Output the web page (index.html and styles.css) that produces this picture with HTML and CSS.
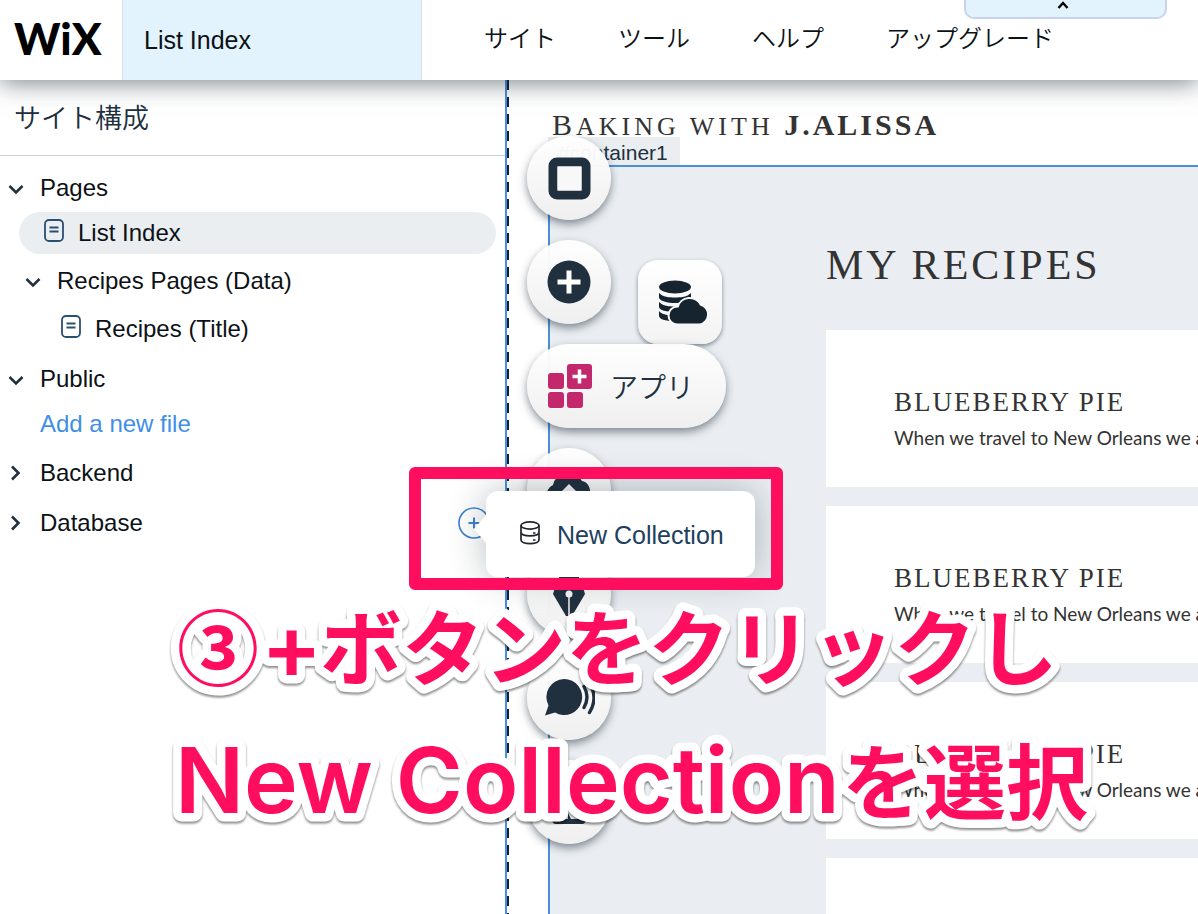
FILE: index.html
```html
<!DOCTYPE html>
<html lang="ja">
<head>
<meta charset="utf-8">
<meta name="viewport" content="width=device-width, initial-scale=1">
<title>Wix Editor</title>
<link rel="stylesheet" href="styles.css">
</head>
<body>
<header class="topbar">
  <a class="logo" href="#">WiX</a>
  <button class="page-picker" type="button">List Index</button>
  <nav class="menu">
    <a href="#">サイト</a>
    <a href="#">ツール</a>
    <a href="#">ヘルプ</a>
    <a href="#">アップグレード</a>
  </nav>
  <button class="pull-tab" type="button" aria-label="閉じる">
    <svg width="12" height="8" viewBox="0 0 12 8"><path d="M1.500 7 6 2l4.500 5" fill="none" stroke="#000" stroke-width="2.400"/></svg>
  </button>
</header>

<main class="workspace">
  <aside class="sidebar">
    <h2 class="sidebar-title">サイト構成</h2>
    <ul class="tree">
      <li class="row"><svg class="chevron" viewBox="0 0 16 16"><path d="M1.500 6 8 12.500 14.500 6"/></svg><span>Pages</span></li>
      <li class="row row-file row-active"><svg class="file" viewBox="0 0 20 24"><rect x="1" y="1" width="18" height="21" rx="4"/><path d="M5.500 8.500h9M5.500 12.500h9"/></svg><span>List Index</span></li>
      <li class="row row-nested"><svg class="chevron" viewBox="0 0 16 16"><path d="M1.500 6 8 12.500 14.500 6"/></svg><span>Recipes Pages (Data)</span></li>
      <li class="row row-file row-deep"><svg class="file" viewBox="0 0 20 24"><rect x="1" y="1" width="18" height="21" rx="4"/><path d="M5.500 8.500h9M5.500 12.500h9"/></svg><span>Recipes (Title)</span></li>
      <li class="row row-section"><svg class="chevron" viewBox="0 0 16 16"><path d="M1.500 6 8 12.500 14.500 6"/></svg><span>Public</span></li>
      <li class="row row-link"><a href="#">Add a new file</a></li>
      <li class="row row-section"><svg class="chevron" viewBox="0 0 16 16"><path d="M4 1.500 10.500 8 4 14.500"/></svg><span>Backend</span></li>
      <li class="row row-section"><svg class="chevron" viewBox="0 0 16 16"><path d="M4 1.500 10.500 8 4 14.500"/></svg><span>Database</span>
        <button class="add" type="button" aria-label="追加"><svg width="32" height="32" viewBox="0 0 32 32" fill="none" stroke="#3a80d2" stroke-width="1.600"><circle cx="16" cy="16" r="15"/><path d="M10.500 16h11M16 10.500v11" stroke-width="2"/></svg></button>
      </li>
    </ul>
  </aside>

  <section class="canvas">
    <h1 class="brand"><span class="brand-cap">B</span>AKING WITH <b>J.ALISSA</b></h1>
    <span class="tag">#container1</span>
    <div class="container">
      <h2 class="recipes-title">MY RECIPES</h2>
      <article class="card"><h3>BLUEBERRY PIE</h3><p>When we travel to New Orleans we always</p></article>
      <article class="card"><h3>BLUEBERRY PIE</h3><p>When we travel to New Orleans we always</p></article>
      <article class="card"><h3>BLUEBERRY PIE</h3><p>When we travel to New Orleans we always</p></article>
      <article class="card"></article>
    </div>
  </section>
</main>

<button class="data-tool" type="button" aria-label="データ">
  <svg width="50" height="44" viewBox="0 0 50 44" fill="#162430">
    <ellipse cx="17" cy="7" rx="16" ry="6.500"/>
    <path d="M1 13c4 4 10 4.500 16 4.500s12-.500 16-4.500v5c-4 4-9 5-16 5S1 21 1 17.500z"/>
    <path d="M1 22c4 4 10 4.500 16 4.500h8L20 32C8 32 1 30.500 1 26.500z"/>
    <path d="M1 31c3 3.500 8 4.500 16 4.500V41C7 41 1 39.500 1 35.500z"/>
    <path d="M19.500 43.500a8 8 0 0 1 0-16h1a11.500 11.500 0 0 1 21.500-2 9.200 9.200 0 0 1-.500 18z" stroke="#fafafa" stroke-width="4" paint-order="stroke"/>
  </svg>
</button>

<nav class="tools">
  <button class="tool" type="button" aria-label="背景"><svg width="44" height="44" viewBox="0 0 44 44"><rect x="6" y="6" width="33" height="33" rx="4" fill="none" stroke="#20303f" stroke-width="9"/><path d="M10.500 10.500h24v24h-24z" fill="#f8f8f8"/></svg></button>
  <button class="tool" type="button" aria-label="追加"><svg width="44" height="44" viewBox="0 0 44 44"><circle cx="22" cy="22" r="21.500" fill="#20303f"/><path d="M22 10.500v23M10.500 22h23" stroke="#fff" stroke-width="5"/></svg></button>
  <button class="tool tool-wide" type="button">
    <svg width="44" height="44" viewBox="0 0 44 44" fill="#c4286c"><rect x="0" y="9" width="16" height="16" rx="3"/><rect x="0" y="28" width="16" height="16" rx="3"/><rect x="19" y="28" width="16" height="16" rx="3"/><rect x="19" y="0" width="25" height="25" rx="3"/><path d="M31.500 5.500v14M24.500 12.500h14" stroke="#fff" stroke-width="3.500"/></svg>
    <span>アプリ</span>
  </button>
  <button class="tool" type="button" aria-label="アップロード"><svg width="44" height="44" viewBox="0 0 44 44"><path d="M10 38A11 11 0 0 1 6 17a15.500 15.500 0 0 1 29-4c10 1 12 20 0 25z" fill="#20303f"/><path d="m22 16 9 9h-6v13h-6V25h-6z" fill="#f6f6f6"/></svg></button>
  <button class="tool" type="button" aria-label="ブログ"><svg width="44" height="44" viewBox="0 0 44 44"><path d="M12 0h20v6H12zM10 9h24l4 13-13 22h-6L6 22z" fill="#20303f"/><path d="M22 24v20" stroke="#f6f6f6" stroke-width="1.500"/><circle cx="22" cy="22" r="3.500" fill="#f6f6f6"/></svg></button>
  <button class="tool" type="button" aria-label="チャット"><svg width="52" height="44" viewBox="0 0 52 44"><path d="M21 3a18 18 0 1 1-9 33.500L2 39.500l3.500-10A18 18 0 0 1 21 3z" fill="#20303f"/><path d="M41 10.500q6 10.500 0 21M46.500 7.500q9 14 0 29" fill="none" stroke="#20303f" stroke-width="3.400" stroke-linecap="round"/></svg></button>
  <button class="tool" type="button" aria-label="入力"><svg width="44" height="44" viewBox="0 0 44 44"><path d="M22 4 34 18H26v12h-8V18h-8zM21 33l3 6h15q0 5-4 5H9q-4 0-4-5h16z" fill="#20303f"/></svg></button>
</nav>

<div class="popover">
  <button class="popover-item" type="button">
    <svg width="20" height="24" viewBox="0 0 20 24" fill="none" stroke="#20262e" stroke-width="1.700"><ellipse cx="10" cy="4.500" rx="9" ry="3.600"/><path d="M1 4.500v14c0 5.500 18 5.500 18 0v-14M1 11.500c1 4.500 17 4.500 18 0"/><path d="M13 12h2.500M13 19h2.500"/></svg>
    <span>New Collection</span>
  </button>
</div>
<div class="highlight"></div>

<svg class="caption" width="930" height="270" viewBox="0 0 930 270">
  <text y="96"><tspan x="0">③</tspan><tspan class="latin" x="84">+</tspan><tspan x="143">ボタンをクリックし</tspan></text>
  <text y="230"><tspan class="latin" x="-2">New Collection</tspan><tspan x="665">を選択</tspan></text>
</svg>
</body>
</html>
```
FILE: styles.css
```css
* { box-sizing: border-box; margin: 0; padding: 0; }

body {
  position: relative;
  display: flex;
  flex-direction: column;
  height: 100vh;
  overflow: hidden;
  background: #fff;
  color: #0c1116;
  font-family: "Liberation Sans", "Noto Sans CJK JP", sans-serif;
  font-size: 24px;
}

button { border: 0; background: none; color: inherit; font: inherit; cursor: pointer; }
a { color: inherit; text-decoration: none; }
ul { list-style: none; }
svg { flex: none; display: block; }

/* Top bar */
.topbar {
  position: relative;
  z-index: 2;
  display: flex;
  flex: none;
  height: 80px;
  background: #fff;
  box-shadow: 0 2px 24px rgba(22, 36, 48, 0.6);
}
.logo {
  width: 122px;
  padding-left: 14px;
  color: #000;
  font: 900 44px/76px Lato, sans-serif;
}
.page-picker {
  width: 300px;
  padding-left: 21px;
  border: solid #d6dfee;
  border-width: 0 1px;
  background: #e3f3fe;
  font-size: 25px;
  text-align: left;
}
.menu {
  display: flex;
  align-items: center;
  gap: 62px;
  padding: 0 0 7px 62px;
  font-family: "Noto Sans CJK JP", sans-serif;
  font-weight: 350;
  white-space: nowrap;
}
.pull-tab {
  position: absolute;
  top: 0;
  right: 31px;
  display: flex;
  justify-content: center;
  width: 203px;
  height: 19px;
  padding: 1px 6px 0 0;
  border: solid #c9d4ea;
  border-width: 0 2px 2px;
  border-radius: 0 0 10px 10px;
  background: #e3f3fe;
}

/* Sidebar */
.workspace { display: flex; flex: 1; min-height: 0; }
.sidebar {
  flex: none;
  width: 507px;
  border-right: 2px solid #4a90d9;
}
.sidebar-title {
  height: 76px;
  padding-left: 14px;
  border-bottom: 1px solid #c8d2d8;
  color: #20303f;
  font: 350 27px/74px "Noto Sans CJK JP", sans-serif;
}
.tree { display: flex; flex-direction: column; padding-top: 8px; }
.row {
  display: flex;
  align-items: center;
  gap: 16px;
  height: 48px;
  padding-left: 8px;
}
.row-active {
  height: 42px;
  margin-right: 9px;
  margin-left: 19px;
  border-radius: 21px;
  background: #eaeef0;
}
.row-file { gap: 14px; padding-left: 25px; }
.row-nested { height: 54px; padding-left: 25px; }
.row-deep { height: 42px; padding-left: 61px; }
.row-section { height: 50px; }
.row-section:nth-child(5) { margin-top: 4px; }
.row-link { height: 44px; padding: 0 0 4px 40px; color: #3f8ee8; }
.chevron { width: 16px; height: 16px; fill: none; stroke: #20303f; stroke-width: 2.6; }
.file { width: 20px; height: 24px; margin-bottom: 5px; fill: none; stroke: #2b4f70; stroke-width: 1.8; }
.add { margin-right: 15px; margin-left: auto; }

/* Site canvas */
.canvas {
  display: flex;
  flex: 1;
  flex-direction: column;
  min-width: 0;
  overflow: hidden;
  padding-left: 41px;
  background: repeating-linear-gradient(#0c2340 0 10px, transparent 10px 17px) left / 2px 100% no-repeat;
}
.brand {
  height: 57px;
  padding: 25px 0 0 4px;
  color: #333;
  font: 400 26px/40px "Liberation Serif", serif;
  letter-spacing: 4px;
  white-space: nowrap;
}
.brand-cap, .brand b { font-size: 30px; }
.brand b { letter-spacing: 3px; }
.tag {
  align-self: flex-start;
  height: 28px;
  padding: 0 12px 0 10px;
  background: #eaeef0;
  color: #20303f;
  font-size: 21px;
  line-height: 32px;
}
.container {
  display: flex;
  flex: 1;
  flex-direction: column;
  gap: 19px;
  border: solid #4a90d9;
  border-width: 2px 0 0 2px;
  background: #eaeef2;
  padding-left: 276px;
}
.recipes-title {
  height: 144px;
  padding-top: 70px;
  color: #333;
  font: 400 42px/56px "Liberation Serif", serif;
  letter-spacing: 3px;
  white-space: nowrap;
}
.card {
  flex: none;
  height: 157px;
  padding: 56px 0 0 68px;
  overflow: hidden;
  background: #fff;
  color: #333;
  white-space: nowrap;
}
.card h3 { font: 400 27px/32px "Liberation Serif", serif; letter-spacing: 2px; }
.card p { padding-top: 4px; font: 400 19px/32px Lato, sans-serif; }

/* Floating tools */
.tools {
  position: absolute;
  z-index: 1;
  top: 136px;
  left: 527px;
  display: flex;
  flex-direction: column;
  gap: 20px;
}
.tool {
  display: flex;
  align-items: center;
  justify-content: center;
  width: 84px;
  height: 84px;
  border-radius: 42px;
  background: linear-gradient(rgba(255, 255, 255, 0.96), #efefef);
  box-shadow: 0 4px 8px rgba(22, 36, 48, 0.5);
}
.tool-wide {
  justify-content: flex-start;
  gap: 18px;
  width: 199px;
  padding-left: 21px;
  color: #20303f;
  font: 350 28px/40px "Noto Sans CJK JP", sans-serif;
}
.data-tool {
  position: absolute;
  z-index: 1;
  top: 260px;
  left: 638px;
  display: flex;
  align-items: center;
  justify-content: center;
  width: 84px;
  height: 84px;
  padding-left: 6px;
  border-radius: 20px;
  background: linear-gradient(#fff, #f3f3f3);
  box-shadow: 0 2px 4px rgba(22, 36, 48, 0.5);
}

/* Popover and annotations */
.popover {
  position: absolute;
  z-index: 3;
  top: 491px;
  left: 486px;
  width: 269px;
  height: 86px;
  border-radius: 12px;
  background: #fff;
  box-shadow: 0 0 36px rgba(22, 36, 48, 0.3);
}
.popover::before {
  content: "";
  position: absolute;
  top: 24px;
  left: -12px;
  border: solid transparent;
  border-width: 14px 12px 14px 0;
  border-right-color: #fff;
}
.popover-item {
  display: flex;
  align-items: center;
  gap: 17px;
  width: 100%;
  height: 100%;
  padding: 3px 0 0 34px;
  color: #20405e;
  font-size: 25px;
  white-space: nowrap;
}
.popover-item svg { margin-bottom: 6px; }
.highlight {
  position: absolute;
  z-index: 4;
  top: 467px;
  left: 409px;
  width: 374px;
  height: 123px;
  border: 12px solid #ff0e5f;
  border-radius: 6px;
}
.caption {
  position: absolute;
  z-index: 5;
  top: 583px;
  left: 177px;
  overflow: visible;
  fill: #ff0e5f;
  stroke: #fff;
  stroke-width: 17px;
  stroke-linejoin: round;
  paint-order: stroke;
  font: 700 82px "Noto Sans CJK JP", sans-serif;
  filter: drop-shadow(0 2px 1px rgba(0, 0, 0, 0.45));
}
.latin { font: 600 91px Inter, sans-serif; }
```
